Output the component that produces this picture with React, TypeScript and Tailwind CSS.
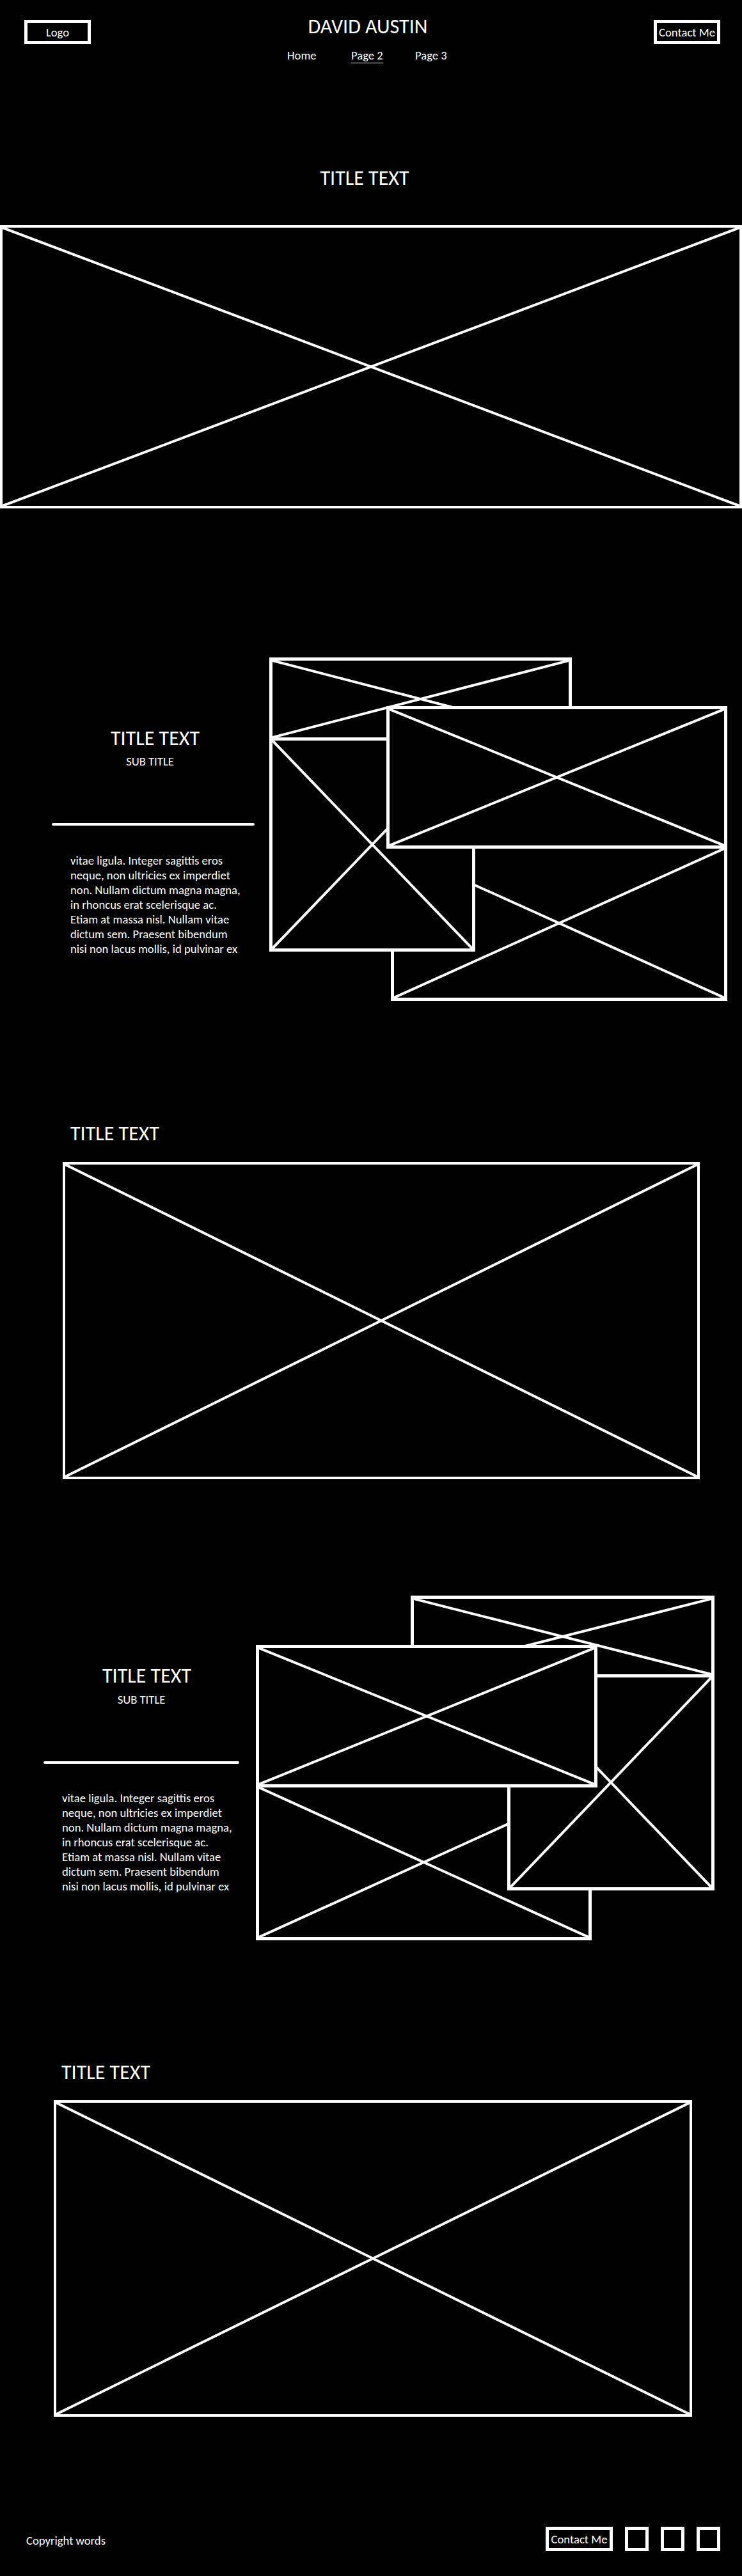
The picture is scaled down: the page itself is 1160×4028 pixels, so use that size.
const para = [
  "vitae ligula. Integer sagittis eros",
  "neque, non ultricies ex imperdiet",
  "non. Nullam dictum magna magna,",
  "in rhoncus erat scelerisque ac.",
  "Etiam at massa nisl. Nullam vitae",
  "dictum sem. Praesent bibendum",
  "nisi non lacus mollis, id pulvinar ex",
];

// wireframe image placeholder: a box with an X through it
function XBox({ className, stroke = 4 }: { className: string; stroke?: number }) {
  return (
    <div className={`bg-black border-white ${className}`}>
      <svg className="absolute inset-0 h-full w-full" viewBox="0 0 100 100" preserveAspectRatio="none">
        <line x1="0" y1="0" x2="100" y2="100" stroke="white" strokeWidth={stroke} vectorEffect="non-scaling-stroke" />
        <line x1="100" y1="0" x2="0" y2="100" stroke="white" strokeWidth={stroke} vectorEffect="non-scaling-stroke" />
      </svg>
    </div>
  );
}

function Paragraph() {
  return (
    <div className="pl-[29px] text-[18.67px] leading-[23px]">
      {para.map((l) => (
        <div key={l} className="whitespace-nowrap">{l}</div>
      ))}
    </div>
  );
}

export default function App() {
  return (
    <div className="min-h-[4028px] overflow-hidden bg-black font-['Carlito','Calibri',sans-serif] text-white">
      <header className="flex h-[100px] items-start pl-[38px] pr-[34px] pt-[22px]">
        <div className="mt-[9px] flex h-[38px] w-[104px] items-center justify-center border-[5px] border-white text-[18.67px] leading-[23px]">Logo</div>
        <div className="flex-1">
          <div className="pr-[14px] text-center text-[32px] leading-[40px]">DAVID AUSTIN</div>
          <nav className="mt-[13px] flex justify-center pr-[16px] text-[18.67px] leading-[23px]">
            <div className="w-[100px]">Home</div>
            <div className="w-[100px]">
              <span className="inline-block border-b border-white">Page 2</span>
            </div>
            <div className="w-[50px] whitespace-nowrap">Page 3</div>
          </nav>
        </div>
        <div className="mt-[9px] flex h-[38px] w-[104px] items-center justify-center border-[5px] border-white text-[18.67px] leading-[23px] whitespace-nowrap">Contact Me</div>
      </header>

      <section className="mt-[159px]">
        <h2 className="pr-[20px] text-center text-[32px] leading-[40px]">TITLE TEXT</h2>
        <XBox className="relative mt-[53px] h-[443px] w-full border-4" />
      </section>

      <section className="mt-[233px] flex pl-[81px]">
        <div className="w-[317px] pt-[107px]">
          <h2 className="pl-[6px] text-center text-[32px] leading-[40px]">TITLE TEXT</h2>
          <div className="mt-[4px] pr-[10px] text-center text-[18.67px] leading-[23px]">SUB TITLE</div>
          <div className="mt-[85px] h-[4px] rounded-full bg-white" />
          <div className="mt-[43px]">
            <Paragraph />
          </div>
        </div>
        <div className="relative ml-[23px] h-[537px] w-[716px]">
          <XBox className="absolute left-0 top-0 h-[130px] w-[473px] border-[5px]" />
          <XBox className="absolute left-[190px] top-[294px] h-[243px] w-[526px] border-[5px]" />
          <XBox className="absolute left-0 top-[125px] h-[335px] w-[322px] border-[5px]" />
          <XBox className="absolute left-[183px] top-[76px] h-[223px] w-[533px] border-[5px]" />
        </div>
      </section>

      <section className="mt-[188px] pl-[98px]">
        <h2 className="pl-[12px] text-[32px] leading-[40px]">TITLE TEXT</h2>
        <XBox className="relative mt-[24px] h-[496px] w-[996px] border-4" />
      </section>

      <section className="mt-[182px] flex pl-[68px]">
        <div className="w-[306px] pt-[106px]">
          <h2 className="pl-[17px] text-center text-[32px] leading-[40px]">TITLE TEXT</h2>
          <div className="mt-[5px] text-center text-[18.67px] leading-[23px]">SUB TITLE</div>
          <div className="mt-[85px] h-[4px] rounded-full bg-white" />
          <div className="mt-[42px]">
            <Paragraph />
          </div>
        </div>
        <div className="relative ml-[26px] h-[539px] w-[717px]">
          <XBox className="absolute left-[242px] top-0 h-[128px] w-[475px] border-[5px]" />
          <XBox className="absolute left-0 top-[295px] h-[244px] w-[525px] border-[5px]" />
          <XBox className="absolute left-[393px] top-[123px] h-[338px] w-[324px] border-[5px]" />
          <XBox className="absolute left-0 top-[77px] h-[223px] w-[534px] border-[5px]" />
        </div>
      </section>

      <section className="mt-[187px] pl-[84px]">
        <h2 className="pl-[12px] text-[32px] leading-[40px]">TITLE TEXT</h2>
        <XBox className="relative mt-[23px] h-[495px] w-[998px] border-4" />
      </section>

      <footer className="mt-[172px] flex items-start justify-between pl-[41px] pr-[34px]">
        <div className="mt-[10px] text-[18.67px] leading-[23px]">Copyright words</div>
        <div className="flex gap-[19px]">
          <div className="flex h-[38px] w-[105px] items-center justify-center border-[5px] border-white text-[18.67px] leading-[23px] whitespace-nowrap">Contact Me</div>
          <div className="h-[38px] w-[37px] border-[5px] border-white" />
          <div className="h-[38px] w-[37px] border-[5px] border-white" />
          <div className="h-[38px] w-[37px] border-[5px] border-white" />
        </div>
      </footer>
    </div>
  );
}
